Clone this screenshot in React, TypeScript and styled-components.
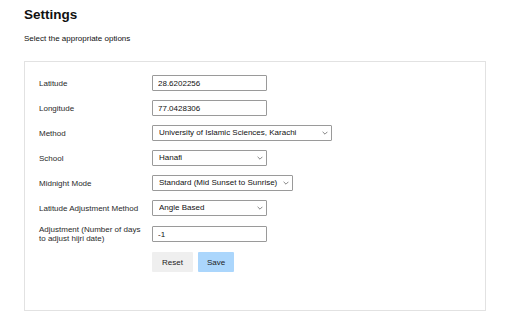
import React, { useState } from 'react';
import styled, { createGlobalStyle } from 'styled-components';

// Types
interface FieldRow {
  label: string;
  kind: 'input' | 'select';
  value: string;
  options?: string[];
  width?: number;
}

const GlobalStyle = createGlobalStyle`
  body {
    margin: 0;
    background: #ffffff;
    font-family: "Liberation Sans", Arial, sans-serif;
    color: #111;
  }
`;

// Styled components
const Page = styled.div`
  padding: 7px 26px 10px 24px;
`;

const Title = styled.h1`
  margin: 0;
  font-size: 13.5px;
  font-weight: 700;
  line-height: 16px;
`;

const Subtitle = styled.p`
  margin: 11px 0 0;
  font-size: 8px;
  line-height: 10px;
`;

const Card = styled.div`
  margin-top: 17px;
  border: 1px solid #e2e2e2;
  padding: 13px 14px 38px;
  display: flex;
  flex-direction: column;
  gap: 9px;
  min-height: 197px;
`;

const Row = styled.div`
  display: grid;
  grid-template-columns: 105px auto;
  column-gap: 8px;
  align-items: center;
`;

const Label = styled.label`
  font-size: 8px;
  line-height: 9px;
  color: #2a2a2a;
`;

const TextInput = styled.input`
  box-sizing: border-box;
  width: 115px;
  height: 16px;
  padding: 0 5px;
  border: 1px solid #9a9a9a;
  border-radius: 1px;
  font-family: "Liberation Sans", Arial, sans-serif;
  font-size: 8px;
  color: #111;
  outline: none;
`;

const SelectWrap = styled.div<{ $width: number }>`
  position: relative;
  width: ${({ $width }) => $width}px;
  height: 16px;
`;

const Select = styled.select`
  appearance: none;
  -webkit-appearance: none;
  display: block;
  box-sizing: border-box;
  width: 100%;
  height: 16px;
  margin: 0;
  padding: 0 8px 0 6px;
  border: 1px solid #9a9a9a;
  border-radius: 1px;
  font-family: "Liberation Sans", Arial, sans-serif;
  font-size: 8px;
  line-height: 14px;
  color: #111;
  background: #fff;
  outline: none;
`;

const Chevron = styled.svg`
  position: absolute;
  right: 4px;
  top: 50%;
  width: 6px;
  height: 4px;
  transform: translateY(-50%);
  pointer-events: none;
`;

const Actions = styled.div`
  display: flex;
  gap: 5px;
  margin-top: 0;
`;

const Button = styled.button<{ $primary?: boolean }>`
  height: 20px;
  padding: 0 ${({ $primary }) => ($primary ? '9px' : '10px')};
  border: none;
  border-radius: 1px;
  font-family: "Liberation Sans", Arial, sans-serif;
  font-size: 8px;
  color: #222;
  background: ${({ $primary }) => ($primary ? '#abd6fc' : '#efefef')};
  cursor: pointer;
`;

const rows: FieldRow[] = [
  { label: 'Latitude', kind: 'input', value: '28.6202256' },
  { label: 'Longitude', kind: 'input', value: '77.0428306' },
  {
    label: 'Method',
    kind: 'select',
    value: 'University of Islamic Sciences, Karachi',
    options: ['University of Islamic Sciences, Karachi', 'Muslim World League'],
    width: 180,
  },
  { label: 'School', kind: 'select', value: 'Hanafi', options: ['Hanafi', 'Shafi'], width: 115 },
  {
    label: 'Midnight Mode',
    kind: 'select',
    value: 'Standard (Mid Sunset to Sunrise)',
    options: ['Standard (Mid Sunset to Sunrise)', 'Jafari (Mid Sunset to Fajr)'],
    width: 141,
  },
  {
    label: 'Latitude Adjustment Method',
    kind: 'select',
    value: 'Angle Based',
    options: ['Angle Based', 'Middle of the Night', 'One Seventh'],
    width: 115,
  },
  { label: 'Adjustment (Number of days to adjust hijri date)', kind: 'input', value: '-1' },
];

// Component
const App: React.FC = () => {
  const [values, setValues] = useState<string[]>(rows.map((r) => r.value));

  const update = (index: number, value: string) => {
    setValues((prev) => prev.map((v, i) => (i === index ? value : v)));
  };

  return (
    <>
      <GlobalStyle />
      <Page>
        <Title>Settings</Title>
        <Subtitle>Select the appropriate options</Subtitle>
        <Card>
          {rows.map((row, index) => (
            <Row key={row.label}>
              <Label>{row.label}</Label>
              {row.kind === 'input' ? (
                <TextInput value={values[index]} onChange={(e) => update(index, e.target.value)} />
              ) : (
                <SelectWrap $width={row.width ?? 115}>
                  <Select value={values[index]} onChange={(e) => update(index, e.target.value)}>
                    {row.options?.map((opt) => (
                      <option key={opt}>{opt}</option>
                    ))}
                  </Select>
                  <Chevron viewBox="0 0 6 4">
                    <path d="M0.6 0.8 L3 3.2 L5.4 0.8" fill="none" stroke="#666" strokeWidth="0.8" />
                  </Chevron>
                </SelectWrap>
              )}
            </Row>
          ))}
          <Row>
            <span />
            <Actions>
              <Button onClick={() => setValues(rows.map((r) => r.value))}>Reset</Button>
              <Button $primary>Save</Button>
            </Actions>
          </Row>
        </Card>
      </Page>
    </>
  );
};

export default App;
